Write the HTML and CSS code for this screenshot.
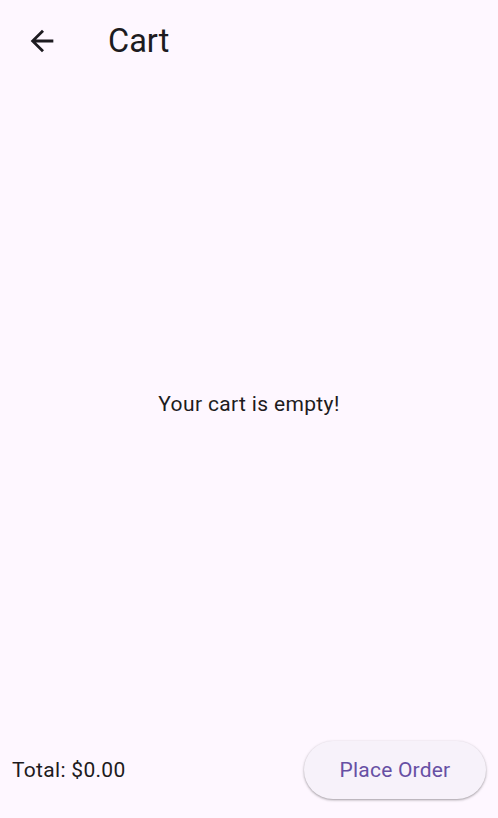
FILE: index.html
```html
<!DOCTYPE html>
<html>
<head>
<meta charset="utf-8">
<link rel="stylesheet" href="styles.css">
</head>
<body>
<div class="app">
  <header class="appbar">
    <button class="back" aria-label="Back">
      <svg width="34" height="34" viewBox="0 0 24 24"><path d="M20 11H7.83l5.59-5.59L12 4l-8 8 8 8 1.41-1.41L7.83 13H20v-2z" fill="#1d1b20"/></svg>
    </button>
    <h1 class="title">Cart</h1>
  </header>
  <main class="content">
    <p class="empty">Your cart is empty!</p>
  </main>
  <footer class="footer">
    <span class="total">Total: $0.00</span>
    <button class="order">Place Order</button>
  </footer>
</div>
</body>
</html>
```
FILE: styles.css
```css
html, body {
  margin: 0;
  padding: 0;
  height: 100%;
}
body {
  background: #fef7ff;
  font-family: Roboto, "Noto Sans", sans-serif;
  color: #1d1b20;
}
.app {
  display: flex;
  flex-direction: column;
  height: 100vh;
}
.appbar {
  height: 82px;
  display: flex;
  align-items: center;
  padding: 0 0 0 25px;
  flex: none;
}
.back {
  background: none;
  border: none;
  padding: 0;
  width: 34px;
  height: 34px;
  display: flex;
  align-items: center;
  justify-content: center;
  cursor: pointer;
}
.title {
  margin: 0 0 0 49px;
  font-size: 32.5px;
  font-weight: 400;
  letter-spacing: 0;
}
.content {
  flex: 1;
  display: flex;
  align-items: center;
  justify-content: center;
}
.empty {
  margin: 0;
  font-size: 21px;
  letter-spacing: 0.35px;
}
.footer {
  flex: none;
  height: 88px;
  padding: 0 12px 4px 12px;
  display: flex;
  align-items: center;
  justify-content: space-between;
}
.total {
  font-size: 21px;
  letter-spacing: 0.3px;
}
.order {
  width: 182px;
  height: 58px;
  border: none;
  border-radius: 29px;
  background: #f7f2fa;
  color: #6750a4;
  font-family: Roboto, "Noto Sans", sans-serif;
  font-size: 21px;
  letter-spacing: 0.2px;
  box-shadow: 0 1px 3px rgba(0,0,0,0.25), 0 1px 2px rgba(0,0,0,0.15);
}
```
